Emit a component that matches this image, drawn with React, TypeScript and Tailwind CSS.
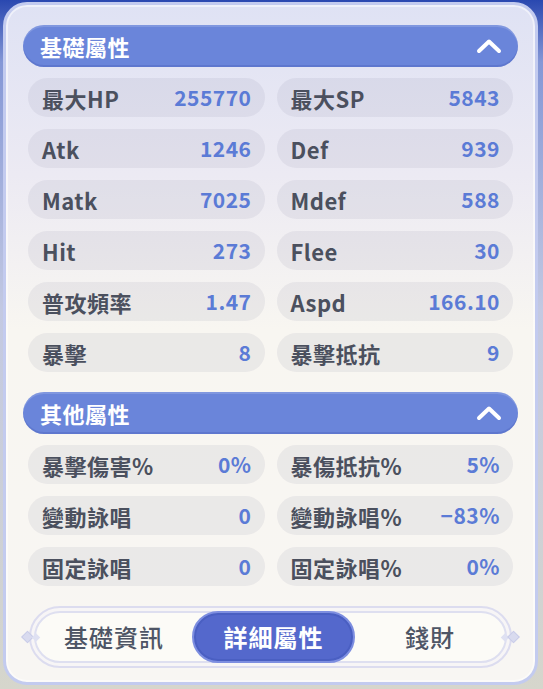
import React from "react";

const font = { fontFamily: '"Noto Sans CJK TC", "Noto Sans", sans-serif' };

type Stat = [string, string];

function Chevron() {
  return (
    <svg width="26" height="16" viewBox="0 0 26 16" fill="none">
      <path d="M3 13 L13 3.5 L23 13" stroke="white" strokeWidth="4" strokeLinecap="round" strokeLinejoin="round" />
    </svg>
  );
}

function Header({ title }: { title: string }) {
  return (
    <div className="h-[42px] rounded-full bg-[#6a85da] flex items-center justify-between pl-[17px] pr-[16px] shadow-[inset_0_-2px_0_rgba(60,80,170,0.25),inset_0_2px_0_rgba(255,255,255,0.15)]">
      <span className="text-white font-bold text-[22px] leading-none tracking-[0.5px]">{title}</span>
      <Chevron />
    </div>
  );
}

function Cell({ s }: { s: Stat }) {
  return (
    <div className="h-[39px] rounded-full bg-[rgba(115,118,150,0.10)] flex items-center justify-between pl-[14px] pr-[13px]">
      <span className="text-[#4b505e] font-bold text-[22px] leading-none tracking-[0.5px]">{s[0]}</span>
      <span className="text-[#5b7bd6] font-bold text-[21px] leading-none tracking-[0.5px]">{s[1]}</span>
    </div>
  );
}

function Section({ title, stats }: { title: string; stats: Stat[] }) {
  return (
    <div>
      <Header title={title} />
      <div className="mt-[11px] px-[5px] grid grid-cols-2 gap-x-[12px] gap-y-[12px]">
        {stats.map((s, i) => (
          <Cell key={i} s={s} />
        ))}
      </div>
    </div>
  );
}

const basic: Stat[] = [
  ["最大HP", "255770"],
  ["最大SP", "5843"],
  ["Atk", "1246"],
  ["Def", "939"],
  ["Matk", "7025"],
  ["Mdef", "588"],
  ["Hit", "273"],
  ["Flee", "30"],
  ["普攻頻率", "1.47"],
  ["Aspd", "166.10"],
  ["暴擊", "8"],
  ["暴擊抵抗", "9"],
];

const other: Stat[] = [
  ["暴擊傷害%", "0%"],
  ["暴傷抵抗%", "5%"],
  ["變動詠唱", "0"],
  ["變動詠唱%", "−83%"],
  ["固定詠唱", "0"],
  ["固定詠唱%", "0%"],
];

function Diamond() {
  return <div className="w-[9px] h-[9px] rotate-45 bg-[#d9dbef] border border-[#c9cce8]" />;
}

function Tabs() {
  return (
    <div className="relative mx-[6px] h-[62px] flex items-center">
      <div className="absolute left-[-6px] top-1/2 -translate-y-1/2 flex items-center gap-[1px]">
        <Diamond />
        <div className="w-[6px] h-[6px] rotate-45 bg-[#dfe1f2]" />
      </div>
      <div className="absolute right-[-6px] top-1/2 -translate-y-1/2 flex items-center gap-[1px]">
        <div className="w-[6px] h-[6px] rotate-45 bg-[#dfe1f2]" />
        <Diamond />
      </div>
      <div className="w-full h-full rounded-full border-[2px] border-[#dcdcef] bg-[#f7f5f6] p-[3px]">
        <div className="w-full h-full rounded-full border-[2px] border-[#dedff0] bg-[#fcfbf7] flex items-center">
          <div className="w-[156px] text-center text-[24px] leading-none text-[#4e5565] font-medium tracking-[1px]">基礎資訊</div>
          <div className="w-[163px] h-[52px] rounded-full bg-[#5468cc] border-[2px] border-[#7d8ee0] shadow-[inset_0_0_0_2px_#4a5fc2] flex items-center justify-center">
            <span className="text-white text-[24px] leading-none font-bold tracking-[1px]">詳細屬性</span>
          </div>
          <div className="flex-1 text-center text-[24px] leading-none text-[#4e5565] font-medium tracking-[1px]">錢財</div>
        </div>
      </div>
    </div>
  );
}

export default function App() {
  return (
    <div
      style={font}
      className="w-[543px] h-[689px] overflow-hidden bg-[linear-gradient(180deg,#2a48b0_0%,#8497d6_9%,#c3c9e2_45%,#d6d6cc_100%)] pt-[2px] pl-[3px]"
    >
      <div className="w-[535px] h-[683px] rounded-[24px] border-[3px] border-[#c3cbef] bg-[linear-gradient(180deg,#dfe2f4_0%,#eceaf3_25%,#f8f6f1_48%,#f8f6f3_100%)] pt-[20px] px-[17px] shadow-[inset_0_0_0_2px_rgba(255,255,255,0.5)]">
        <Section title="基礎屬性" stats={basic} />
        <div className="h-[20px]" />
        <Section title="其他屬性" stats={other} />
        <div className="h-[20px]" />
        <Tabs />
      </div>
    </div>
  );
}
